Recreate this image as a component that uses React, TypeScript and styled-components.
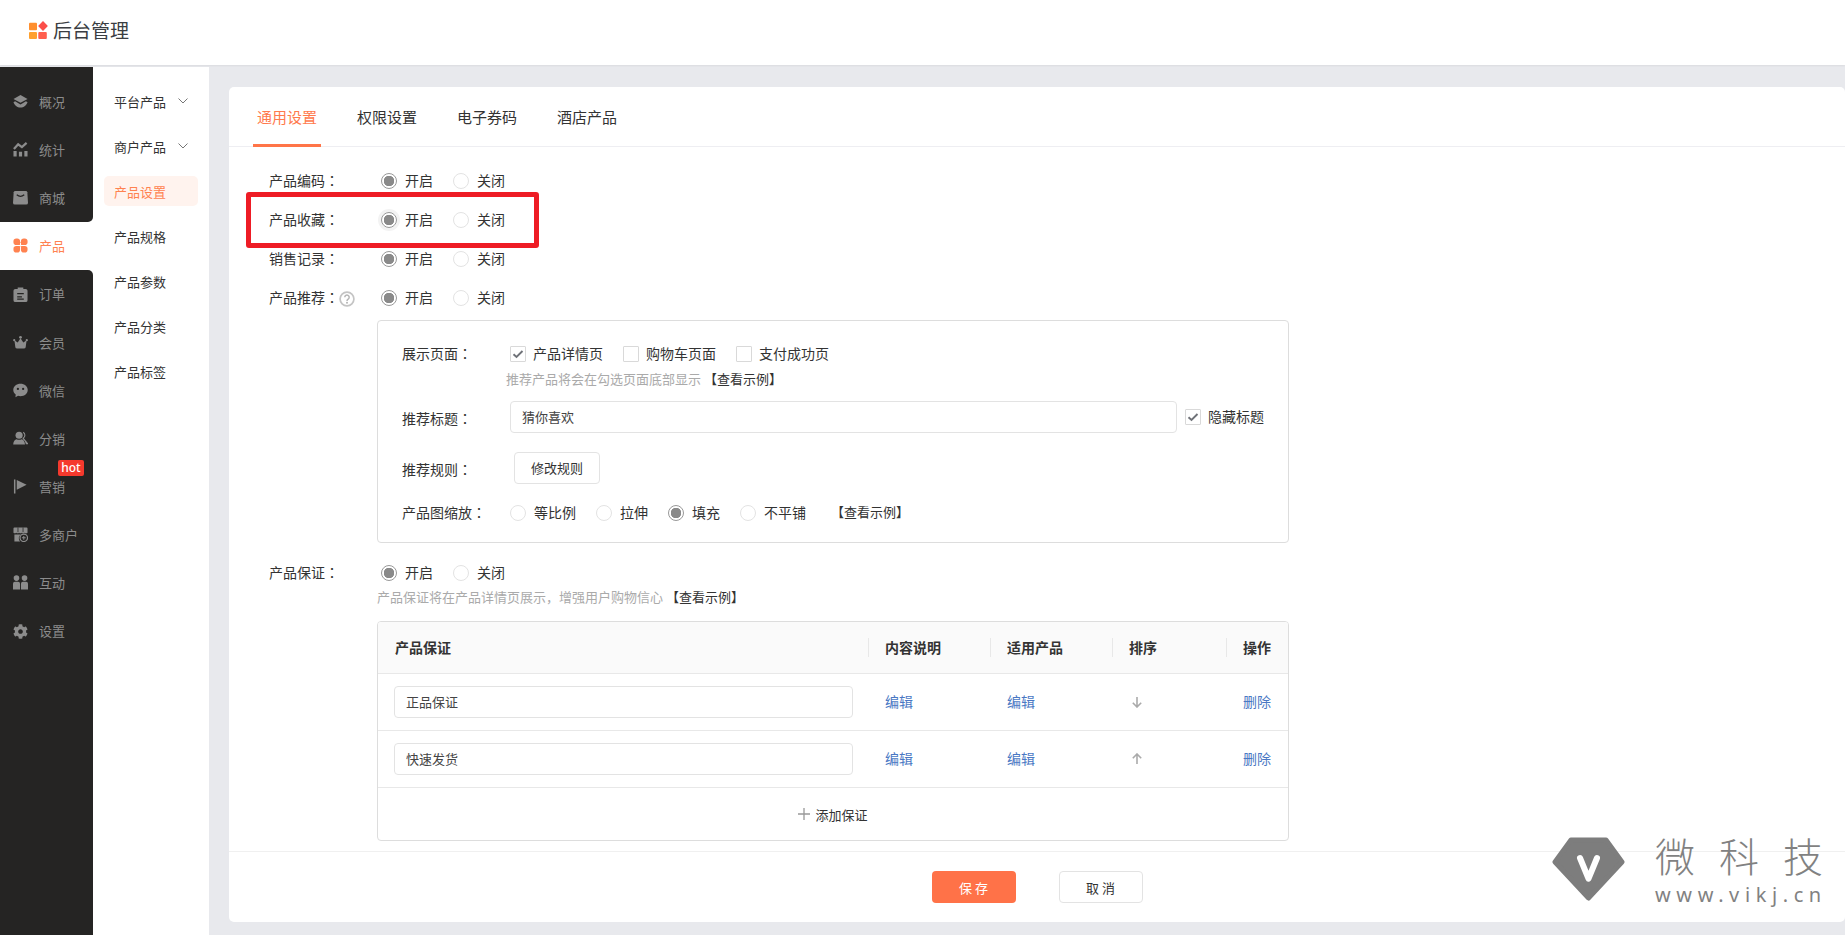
import React, {FC, ReactNode} from "react";
import styled, {createGlobalStyle} from "styled-components";
import {FaCog} from "react-icons/fa";

const GlobalStyle = createGlobalStyle`
  html, body {
    margin: 0;
    padding: 0;
    height: 100%;
    overflow: hidden;
    background: #e8e9ed;
  }
  body, input, button {
    font-family: "Noto Sans CJK SC", "Noto Sans", sans-serif;
    color: #333;
  }
  * {
    box-sizing: border-box;
  }
`

const COLON = "\uFF1A"
const COMMA = "\uFF0C"

const ICONS: Record<string, ReactNode> = {
  layers: (
    <>
      <path d="M8 1 15.500 5.300 8 9.400.5 5.300z"/>
      <path d="M2.200 7.800.5 8.800c1 3 4 5.700 7.500 5.700s6.500-2.700 7.500-5.700l-1.700-1L8 11.200z"/>
    </>
  ),
  stats: (
    <>
      <path d="M.5 9.500h3.400v6H.5zM6.300 10.500h3.400v5H6.300zM12.100 9.500h3.400v6h-3.400z"/>
      <path d="M1 7.500 5.500 2.500l4 3 5-4.500" fill="none" stroke="currentColor" strokeWidth="2.400"/>
    </>
  ),
  bag: (
    <>
      <path d="M2.500 1h11q1.500 0 1.800 1.500l.7 11q0 2-2 2H2q-2 0-2-2l.7-11Q1 1 2.500 1z"/>
      <path d="M4 5q4 3.500 8 0" fill="none" stroke="#252423" strokeWidth="1.300"/>
    </>
  ),
  petals: (
    <>
      <rect x="0.500" y="0.500" width="7" height="7" rx="3"/>
      <rect x="4" y="4" width="3.500" height="3.500" rx="0.500"/>
      <rect x="8.500" y="0.500" width="7" height="7" rx="3"/>
      <rect x="8.500" y="4" width="3.500" height="3.500" rx="0.500"/>
      <rect x="0.500" y="8.500" width="7" height="7" rx="3"/>
      <rect x="4" y="8.500" width="3.500" height="3.500" rx="0.500"/>
      <rect x="8.500" y="8.500" width="7" height="7" rx="3"/>
      <rect x="8.500" y="8.500" width="3.500" height="3.500" rx="0.500"/>
    </>
  ),
  order: (
    <>
      <path d="M5 .5h6V2h2.500Q15.500 2 15.500 4v10q0 2-2 2h-11q-2 0-2-2V4q0-2 2-2H5z"/>
      <path d="M4.500 7h7M4.500 10.500h5M4.500 13h7" fill="none" stroke="#252423" strokeWidth="1.300"/>
    </>
  ),
  crown: (
    <>
      <circle cx="8" cy="2.500" r="1.500"/>
      <circle cx="1.300" cy="5.500" r="1.200"/>
      <circle cx="14.700" cy="5.500" r="1.200"/>
      <path d="M8 3.500 11 8l3.500-2.300L13.500 13q-.2 1.500-2 1.500h-7q-1.800 0-2-1.500L1.500 5.700 5 8z"/>
    </>
  ),
  chat: (
    <>
      <path d="M8 .8c4.300 0 7.700 2.900 7.700 6.600S12.300 14 8 14c-.9 0-1.800-.1-2.600-.4L2.600 15.300l.3-3.100C1.200 11 .3 9.300.3 7.400.3 3.700 3.700.8 8 .8z"/>
      <circle cx="5.200" cy="6.300" r="1.200" fill="#252423"/>
      <circle cx="10.800" cy="6.300" r="1.200" fill="#252423"/>
    </>
  ),
  person: (
    <>
      <circle cx="6.500" cy="4.500" r="3.800"/>
      <path d="M.2 14.500c0-3.700 2-5.500 3.500-5.800 1.800 1 3.800 1 5.600 0 1.500.3 3.500 2.100 3.500 5.800z"/>
      <path d="M10.800 1.500c2.500.8 2.500 5 0 6.200l1.800 2.300 2.900 3.500h-1.300c-.3-2.500-1.400-4-3.200-5" fill="none" stroke="currentColor" strokeWidth="1.200"/>
    </>
  ),
  flag: (
    <>
      <path d="M1 .5h1.600v15H1z"/>
      <path d="M4 1v10.500L14.500 6z"/>
    </>
  ),
  store: (
    <>
      <path d="M1.500.5h13q1 0 1 1V6q-1.600 1.500-3 0-1.500 1.500-3 0-1.500 1.500-3 0-1.500 1.500-3 0-1.500 1.500-3 0V1.500q0-1 1-1z"/>
      <path d="M1.500 8h6.800a5 5 0 0 0-.8 7.500h-6z"/>
      <circle cx="11.500" cy="11.500" r="4" fill="none" stroke="currentColor" strokeWidth="1.300"/>
      <path d="M11.500 9.500v4M9.500 11.500h4" fill="none" stroke="currentColor" strokeWidth="1.100"/>
      <path d="M5.300.5v5M10.700.5v5" fill="none" stroke="#252423" strokeWidth=".8"/>
    </>
  ),
  people: (
    <>
      <circle cx="3.700" cy="3.300" r="3"/>
      <circle cx="12.300" cy="3.300" r="3"/>
      <path d="M0 15.500V9.200Q0 7.200 2 7.200h3.500q2 0 2 2v6.300zM8.500 15.500V9.200q0-2 2-2H14q2 0 2 2v6.300z"/>
    </>
  ),
}

const SideIcon: FC<{name: string}> = ({name}) => (
  <IconSvg viewBox="0 0 16 16" fill="currentColor">{ICONS[name]}</IconSvg>
)

const Radio: FC<{label: string; checked?: boolean; focus?: boolean}> = (props) => (
  <Option>
    <RadioDot $checked={props.checked} $focus={props.focus}/>
    <OptionText>{props.label}</OptionText>
  </Option>
)

const Check: FC<{label: string; checked?: boolean}> = (props) => (
  <CheckOption>
    <CheckBox>
      {props.checked && (
        <svg width="12" height="12" viewBox="0 0 12 12">
          <path d="M1.500 6.200 4.500 9l6-6" fill="none" stroke="#6f7278" strokeWidth="1.900"/>
        </svg>
      )}
    </CheckBox>
    <OptionText>{props.label}</OptionText>
  </CheckOption>
)

const Switch: FC<{focus?: boolean}> = ({focus}) => (
  <Options>
    <Radio label="开启" checked focus={focus}/>
    <Radio label="关闭"/>
  </Options>
)

const guarantees = [
  {name: "正品保证", up: false},
  {name: "快速发货", up: true},
]

export default function App() {
  return (
    <Page>
      <GlobalStyle/>
      <Header>
        <Logo viewBox="0 0 19 18">
          <rect x="0" y="1.700" width="8" height="7.500" rx="1" fill="#ff8f2e"/>
          <rect x="0" y="11" width="8" height="7" rx="1" fill="#ffa02e"/>
          <rect x="9.300" y="11" width="8.500" height="7" rx="1" fill="#ff5f4e"/>
          <path d="M14 0l4.900 5L14 10 9.100 5z" fill="#fb4f4a"/>
        </Logo>
        <Brand>后台管理</Brand>
      </Header>
      <Body>
        <Rail>
          <RailGroup $top>
            <RailItem><SideIcon name="layers"/>概况</RailItem>
            <RailItem><SideIcon name="stats"/>统计</RailItem>
            <RailItem><SideIcon name="bag"/>商城</RailItem>
          </RailGroup>
          <RailItem $active><SideIcon name="petals"/>产品</RailItem>
          <RailGroup>
            <RailItem><SideIcon name="order"/>订单</RailItem>
            <RailItem><SideIcon name="crown"/>会员</RailItem>
            <RailItem><SideIcon name="chat"/>微信</RailItem>
            <RailItem><SideIcon name="person"/>分销</RailItem>
            <RailItem>
              <SideIcon name="flag"/>营销
              <Hot>hot</Hot>
            </RailItem>
            <RailItem><SideIcon name="store"/>多商户</RailItem>
            <RailItem><SideIcon name="people"/>互动</RailItem>
            <RailItem>
              <IconSlot><FaCog size={15}/></IconSlot>设置
            </RailItem>
          </RailGroup>
        </Rail>
        <SubMenu>
          <SubItem>平台产品<Chevron viewBox="0 0 10 6"><path d="M.5.500 5 5 9.500.5"/></Chevron></SubItem>
          <SubItem>商户产品<Chevron viewBox="0 0 10 6"><path d="M.5.500 5 5 9.500.5"/></Chevron></SubItem>
          <SubItem $active>产品设置</SubItem>
          <SubItem>产品规格</SubItem>
          <SubItem>产品参数</SubItem>
          <SubItem>产品分类</SubItem>
          <SubItem>产品标签</SubItem>
        </SubMenu>
        <Main>
          <Card>
            <Tabs>
              <Tab $active>通用设置</Tab>
              <Tab>权限设置</Tab>
              <Tab>电子券码</Tab>
              <Tab>酒店产品</Tab>
            </Tabs>
            <Form>
              <Row><Label>产品编码<Colon>{COLON}</Colon></Label><Switch/></Row>
              <Row><Label>产品收藏<Colon>{COLON}</Colon></Label><Switch focus/></Row>
              <Row><Label>销售记录<Colon>{COLON}</Colon></Label><Switch/></Row>
              <Row>
                <Label>
                  产品推荐<Colon>{COLON}</Colon>
                  <Help viewBox="0 0 16 16">
                    <circle cx="8" cy="8" r="6.900" fill="none" stroke="#c4c4c4" strokeWidth="1.700"/>
                    <path d="M5.800 6.300a2.200 2.200 0 1 1 3.400 1.800c-.8.500-1.200 1-1.200 1.800" fill="none" stroke="#b5b5b5" strokeWidth="1.500"/>
                    <circle cx="8" cy="11.800" r="1" fill="#b5b5b5"/>
                  </Help>
                </Label>
                <Switch/>
              </Row>
              <Panel>
                <PanelRow>
                  <PanelLabel>展示页面<Colon>{COLON}</Colon></PanelLabel>
                  <Options>
                    <Check label="产品详情页" checked/>
                    <Check label="购物车页面"/>
                    <Check label="支付成功页"/>
                  </Options>
                </PanelRow>
                <PanelHint>推荐产品将会在勾选页面底部显示<Example>【查看示例】</Example></PanelHint>
                <InputRow>
                  <PanelLabel $low>推荐标题<Colon>{COLON}</Colon></PanelLabel>
                  <TitleInput $width={667} defaultValue="猜你喜欢"/>
                  <Check label="隐藏标题" checked/>
                </InputRow>
                <RuleRow>
                  <PanelLabel $low>推荐规则<Colon>{COLON}</Colon></PanelLabel>
                  <RuleButton>修改规则</RuleButton>
                </RuleRow>
                <ScaleRow>
                  <PanelLabel>产品图缩放<Colon>{COLON}</Colon></PanelLabel>
                  <Options>
                    <Radio label="等比例"/>
                    <Radio label="拉伸"/>
                    <Radio label="填充" checked/>
                    <Radio label="不平铺"/>
                    <ScaleExample>【查看示例】</ScaleExample>
                  </Options>
                </ScaleRow>
              </Panel>
              <GuaranteeRow><Label>产品保证<Colon>{COLON}</Colon></Label><Switch/></GuaranteeRow>
              <GuaranteeHint>产品保证将在产品详情页展示{COMMA}增强用户购物信心<Example>【查看示例】</Example></GuaranteeHint>
              <Table>
                <HeadRow>
                  <HeadCell>产品保证</HeadCell>
                  <HeadCell $divided>内容说明</HeadCell>
                  <HeadCell $divided>适用产品</HeadCell>
                  <HeadCell $divided>排序</HeadCell>
                  <HeadCell $divided>操作</HeadCell>
                </HeadRow>
                {guarantees.map((item) => (
                  <BodyRow key={item.name}>
                    <TextInput $width={459} defaultValue={item.name}/>
                    <ActionLink>编辑</ActionLink>
                    <ActionLink>编辑</ActionLink>
                    <Arrow viewBox="0 0 12 12" $up={item.up}>
                      <path d="M6 1v10M1.800 6.800 6 11l4.200-4.200"/>
                    </Arrow>
                    <ActionLink>删除</ActionLink>
                  </BodyRow>
                ))}
                <AddRow>
                  <Plus viewBox="0 0 12 12"><path d="M6 0v12M0 6h12"/></Plus>
                  添加保证
                </AddRow>
              </Table>
            </Form>
            <Footer>
              <SaveButton>保 存</SaveButton>
              <CancelButton>取 消</CancelButton>
            </Footer>
          </Card>
        </Main>
      </Body>
      <Highlight/>
      <Watermark>
        <Gem viewBox="0 0 73 64">
          <path d="M19 3h35l16 22-33.500 36L3 25z" fill="#777" stroke="#777" strokeWidth="5" strokeLinejoin="round"/>
          <path d="M28 21l8.500 20.700L45 21" fill="none" stroke="#fff" strokeWidth="6" strokeLinecap="round" strokeLinejoin="round"/>
        </Gem>
        <WatermarkText>
          <WatermarkName><span>微</span><span>科</span><span>技</span></WatermarkName>
          <WatermarkUrl>www.vikj.cn</WatermarkUrl>
        </WatermarkText>
      </Watermark>
    </Page>
  )
}

const Page = styled.div`
  position: relative;
  width: 1845px;
  height: 935px;
  overflow: hidden;
  display: flex;
  flex-direction: column;
`

const Header = styled.header`
  height: 65px;
  flex: none;
  display: flex;
  align-items: center;
  padding: 0 0 5px 29px;
  background: #fff;
  box-shadow: 0 1px 2px rgba(0,0,0,0.06);
`

const Logo = styled.svg`
  width: 19px;
  height: 18px;
  margin-right: 5px;
`

const Brand = styled.span`
  font-size: 19px;
  line-height: 24px;
  color: #3a3d42;
`

const Body = styled.div`
  flex: 1;
  display: flex;
  min-height: 0;
  padding-top: 2px;
`

const Rail = styled.nav`
  width: 93px;
  flex: none;
  display: flex;
  flex-direction: column;
  background: #fff;
`

const RailGroup = styled.div<{$top?: boolean}>`
  background: #252423;
  flex: ${({$top}) => ($top ? "none" : "1")};
  padding-top: ${({$top}) => ($top ? "10.500px" : "0.500px")};
  border-radius: ${({$top}) => ($top ? "0 0 5px 0" : "0 5px 0 0")};
`

const RailItem = styled.div<{$active?: boolean}>`
  position: relative;
  height: 48.100px;
  display: flex;
  align-items: center;
  gap: 11px;
  padding-left: 13px;
  font-size: 13px;
  line-height: 18px;
  color: ${({$active}) => ($active ? "#ff8250" : "#8c8c8c")};
  background: ${({$active}) => ($active ? "#fff" : "transparent")};
`

const IconSvg = styled.svg`
  width: 15px;
  height: 15px;
  flex: none;
`

const IconSlot = styled.span`
  width: 15px;
  height: 15px;
  flex: none;
  display: flex;
`

const Hot = styled.span`
  position: absolute;
  left: 58px;
  top: -3px;
  width: 26px;
  height: 16px;
  border-radius: 2px;
  background: #f5392d;
  color: #fff;
  font-family: "Noto Sans", sans-serif;
  font-size: 12px;
  font-weight: 500;
  line-height: 15px;
  text-align: center;
`

const SubMenu = styled.aside`
  width: 116px;
  flex: none;
  padding: 19px 11px 0;
  background: #fff;
`

const SubItem = styled.div<{$active?: boolean}>`
  height: 30px;
  margin-bottom: 15px;
  padding-left: 10px;
  display: flex;
  align-items: center;
  font-size: 13px;
  border-radius: 5px;
  color: ${({$active}) => ($active ? "#ff8250" : "#333")};
  background: ${({$active}) => ($active ? "#fff3ee" : "transparent")};
`

const Chevron = styled.svg`
  width: 10px;
  height: 6px;
  margin-left: 12px;
  fill: none;
  stroke: #666;
  stroke-width: 0.900;
`

const Main = styled.main`
  flex: 1;
  min-width: 0;
  padding: 20px 0 13px 20px;
  background: #e8e9ed;
`

const Card = styled.section`
  height: 100%;
  display: flex;
  flex-direction: column;
  background: #fff;
  border-radius: 5px;
`

const Tabs = styled.div`
  height: 60px;
  flex: none;
  display: flex;
  gap: 32px;
  padding-left: 24px;
  border-bottom: 1px solid #eeeef2;
`

const Tab = styled.div<{$active?: boolean}>`
  height: 60px;
  padding: 2px 4px 0;
  display: flex;
  align-items: center;
  font-size: 15px;
  color: ${({$active}) => ($active ? "#ff7a4d" : "#333")};
  border-bottom: 3px solid ${({$active}) => ($active ? "#ff7548" : "transparent")};
`

const Form = styled.div`
  flex: 1;
  min-height: 0;
  padding: 14px 0 0 40px;
`

const Row = styled.div`
  height: 39px;
  display: flex;
  align-items: center;
`

const Label = styled.div`
  width: 112px;
  flex: none;
  display: flex;
  align-items: center;
  padding-bottom: 2px;
  font-size: 14px;
  line-height: 20px;
  white-space: nowrap;
`

const Colon = styled.span`
  font-family: "Noto Sans CJK TC", sans-serif;
`

const Help = styled.svg`
  width: 16px;
  height: 16px;
  margin-top: 4px;
`

const Options = styled.div`
  display: flex;
  align-items: center;
  gap: 20px;
`

const Option = styled.label`
  display: flex;
  align-items: center;
  gap: 8px;
  font-size: 14px;
  line-height: 20px;
  white-space: nowrap;
`

const OptionText = styled.span`
  padding-bottom: 2px;
`

const CheckOption = styled(Option)`
  gap: 7px;
`

const RadioDot = styled.span<{$checked?: boolean; $focus?: boolean}>`
  width: 16px;
  height: 16px;
  flex: none;
  border-radius: 50%;
  background: ${({$checked}) => ($checked ? "radial-gradient(circle, #8a8a8a 0 5px, #fff 5.500px)" : "#fff")};
  border: 1px solid ${({$checked}) => ($checked ? "#999" : "#e3e3e3")};
  box-shadow: ${({$focus}) => ($focus ? "0 0 0 3px #f3f3f3" : "none")};
`

const CheckBox = styled.span`
  width: 16px;
  height: 16px;
  flex: none;
  display: flex;
  align-items: center;
  justify-content: center;
  border: 1px solid #d9d9d9;
  border-radius: 1px;
  background: #fff;
`

const Panel = styled.div`
  width: 912px;
  height: 223px;
  margin: 3px 0 0 108px;
  padding: 21px 0 0 24px;
  border: 1px solid #ddd;
  border-radius: 4px;
`

const PanelRow = styled.div`
  height: 24px;
  display: flex;
  align-items: center;
`

const PanelLabel = styled.div<{$low?: boolean}>`
  width: 108px;
  flex: none;
  padding: ${({$low}) => ($low ? "2px 0 0" : "0 0 2px")};
  font-size: 14px;
  line-height: 20px;
  white-space: nowrap;
`

const Hint = styled.div`
  font-size: 13px;
  line-height: 20px;
  color: #aaa;
  white-space: nowrap;
`

const PanelHint = styled(Hint)`
  margin: 3px 0 0 104px;
`

const Example = styled.span`
  margin-left: 3px;
  color: #333;
`

const InputRow = styled.div`
  height: 32px;
  margin-top: 12px;
  display: flex;
  align-items: center;
`

const TextInput = styled.input<{$width: number}>`
  width: ${({$width}) => $width}px;
  height: 32px;
  flex: none;
  padding: 0 11px 2px;
  border: 1px solid #e3e3e3;
  border-radius: 4px;
  outline: none;
  font-size: 13px;
  color: #444;
  background: #fff;
`

const TitleInput = styled(TextInput)`
  margin-right: 8px;
`

const RuleRow = styled.div`
  height: 32px;
  margin-top: 19px;
  display: flex;
  align-items: center;
`

const RuleButton = styled.button`
  width: 86px;
  height: 32px;
  margin-left: 4px;
  padding: 0 0 2px;
  border: 1px solid #e3e3e3;
  border-radius: 4px;
  background: #fff;
  font-size: 13px;
`

const ScaleRow = styled(PanelRow)`
  margin-top: 17px;
`

const ScaleExample = styled.span`
  margin-left: 5px;
  padding-bottom: 2px;
  font-size: 13px;
  line-height: 20px;
`

const GuaranteeRow = styled(Row)`
  margin-top: 10px;
`

const GuaranteeHint = styled(Hint)`
  margin: -5px 0 0 108px;
`

const Table = styled.div`
  width: 912px;
  height: 220px;
  margin: 14px 0 0 108px;
  border: 1px solid #ddd;
  border-radius: 4px;
  overflow: hidden;
`

const columns = "490px 122px 122px 114px 1fr"

const HeadRow = styled.div`
  height: 52px;
  display: grid;
  grid-template-columns: ${columns};
  align-items: center;
  background: #fafafa;
  border-bottom: 1px solid #e8e8e8;
`

const HeadCell = styled.div<{$divided?: boolean}>`
  height: 19px;
  padding: 0 0 2px 16px;
  display: flex;
  align-items: center;
  font-size: 14px;
  font-weight: 700;
  border-left: 1px solid ${({$divided}) => ($divided ? "#e8e8e8" : "transparent")};
`

const BodyRow = styled.div`
  height: 57px;
  display: grid;
  grid-template-columns: ${columns};
  align-items: center;
  border-bottom: 1px solid #e8e8e8;
  & > input {
    margin-left: 16px;
  }
`

const ActionLink = styled.a`
  padding: 0 0 2px 17px;
  font-size: 14px;
  line-height: 20px;
  color: #4a78c4;
`

const Arrow = styled.svg<{$up: boolean}>`
  width: 12px;
  height: 12px;
  margin-left: 19px;
  fill: none;
  stroke: #aaa;
  stroke-width: 1.600;
  transform: ${({$up}) => ($up ? "rotate(180deg)" : "none")};
`

const AddRow = styled.div`
  height: 52px;
  display: flex;
  align-items: center;
  justify-content: center;
  gap: 5px;
  font-size: 13px;
`

const Plus = styled.svg`
  width: 12px;
  height: 12px;
  fill: none;
  stroke: #999;
  stroke-width: 1.300;
`

const Footer = styled.footer`
  height: 71px;
  flex: none;
  display: flex;
  align-items: center;
  justify-content: center;
  gap: 43px;
  border-top: 1px solid #f0f0f0;
`

const SaveButton = styled.button`
  width: 84px;
  height: 32px;
  padding: 0;
  border: none;
  border-radius: 4px;
  background: #ff7248;
  color: #fff;
  font-size: 13px;
`

const CancelButton = styled.button`
  width: 84px;
  height: 32px;
  padding: 0;
  border: 1px solid #e3e3e3;
  border-radius: 4px;
  background: #fff;
  font-size: 13px;
`

const Highlight = styled.div`
  position: absolute;
  left: 246px;
  top: 192px;
  width: 293px;
  height: 56px;
  border: 5px solid #ee1c25;
  border-radius: 3px;
  pointer-events: none;
`

const Watermark = styled.div`
  position: absolute;
  left: 1552px;
  top: 837px;
  display: flex;
  gap: 30px;
  opacity: 0.950;
  pointer-events: none;
`

const Gem = styled.svg`
  width: 73px;
  height: 64px;
  flex: none;
`

const WatermarkText = styled.div`
  margin-top: -2px;
  color: #7b7b7b;
`

const WatermarkName = styled.div`
  display: flex;
  gap: 24px;
  font-size: 40px;
  font-weight: 300;
  line-height: 40px;
`

const WatermarkUrl = styled.div`
  margin-top: 8px;
  font-family: "Noto Sans", sans-serif;
  font-size: 20px;
  line-height: 24px;
  letter-spacing: 5.600px;
  white-space: nowrap;
`
